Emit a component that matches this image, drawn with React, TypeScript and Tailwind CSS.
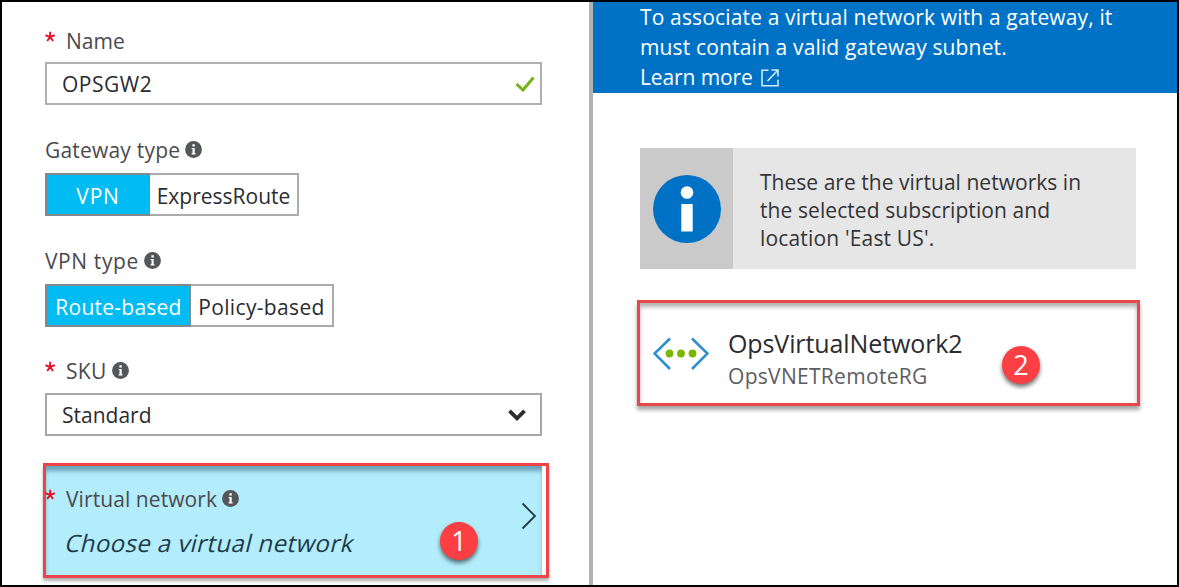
import type { ReactNode } from 'react';

function InfoDot({ className }: { className: string }) {
  return (
    <svg viewBox="0 0 17 17" className={`size-[17px] shrink-0 ${className}`}>
      <circle cx="8.5" cy="8.5" r="8.4" fill="#55565a" />
      <path d="M7.4 3.2h2.4v2.2H7.4zM6.6 6.9h3.1v5.4h.9v1.2H6.6v-1.2h.9V8.1h-.9z" fill="#fff" />
    </svg>
  );
}

function Required() {
  return (
    <svg viewBox="0 0 12 12" className="mt-[5px] h-3 w-[11px] shrink-0">
      <path
        d="M5.6 5.9V.4M5.6 5.9.5 4.1M5.6 5.9l5.1-1.8M5.6 5.9 2.4 10.4M5.6 5.9l3.2 4.5"
        stroke="#e3122a"
        strokeWidth="2.1"
        fill="none"
      />
    </svg>
  );
}

function Label({ children, required, info }: { children: ReactNode; required?: boolean; info?: boolean }) {
  return (
    <div className="flex h-[30px] items-start text-[21px] leading-[30px] text-[#4a4a4c]">
      {required && (
        <span className="flex w-[21px] shrink-0">
          <Required />
        </span>
      )}
      {children}
      {info && <InfoDot className="mt-[6px] ml-[5px]" />}
    </div>
  );
}

function Badge({ children, className }: { children: ReactNode; className: string }) {
  return (
    <div
      className={`absolute flex size-[38px] items-center justify-center rounded-full bg-[#fb3f43] pb-[2px] text-[27px] leading-none font-medium text-white shadow-[0_3px_4px_rgba(0,0,0,0.55)] ${className}`}
    >
      {children}
    </div>
  );
}

export default function App() {
  return (
    <div className="flex h-[587px] w-[1179px] overflow-hidden border-2 border-black bg-white font-['Open_Sans','Noto_Sans',sans-serif] whitespace-nowrap">
      <section className="w-[587px] shrink-0 pt-6 pl-[43px]">
        <Label required>
          <span>Name</span>
        </Label>
        <div className="mt-[6px] flex h-[43px] w-[497px] items-center justify-between border-2 border-[#b0b0b0] pr-[5px] pl-[15px] text-[21px] text-[#2b2c30]">
          <span className="pt-[2px] tracking-[0.5px]">OPSGW2</span>
          <svg viewBox="0 0 20 16" className="h-4 w-5">
            <path d="M1.5 8 8 14 18.5 1.5" fill="none" stroke="#74b31b" strokeWidth="3" />
          </svg>
        </div>

        <div className="mt-[30px]">
          <Label info>
            <span className="tracking-[0.2px]">Gateway type</span>
          </Label>
        </div>
        <div className="mt-2 flex h-[43px] text-[21px] leading-[38px]">
          <div className="flex w-[105px] items-center justify-center border-2 border-r border-[#808a8e] bg-[#00bcf2] text-white">
            <span className="pt-[3px] tracking-[0.8px]">VPN</span>
          </div>
          <div className="flex w-[149px] items-center justify-center border-2 border-l-0 border-[#ababab] text-[#2b2c30]">
            <span className="pt-[3px]">ExpressRoute</span>
          </div>
        </div>

        <div className="mt-[30px]">
          <Label info>
            <span className="tracking-[0.6px]">VPN type</span>
          </Label>
        </div>
        <div className="mt-2 flex h-[43px] text-[21px] leading-[38px]">
          <div className="flex w-[146px] items-center justify-center border-2 border-r border-[#808a8e] bg-[#00bcf2] text-white">
            <span className="pt-[3px] tracking-[0.25px]">Route-based</span>
          </div>
          <div className="flex w-[143px] items-center justify-center border-2 border-l-0 border-[#ababab] text-[#2b2c30]">
            <span className="pt-[3px] tracking-[0.35px]">Policy-based</span>
          </div>
        </div>

        <div className="mt-[29px]">
          <Label required info>
            <span className="tracking-[0.3px]">SKU</span>
          </Label>
        </div>
        <div className="mt-[7px] flex h-[43px] w-[497px] items-center justify-between border-2 border-[#a8a8a8] pr-[14px] pl-[15px] text-[21px] text-[#2b2c30]">
          <span className="pt-[3px]">Standard</span>
          <svg viewBox="0 0 18 12" className="h-3 w-[18px]">
            <path d="M1.5 1.8 9 9.3l7.5-7.5" fill="none" stroke="#2b2c30" strokeWidth="3.8" />
          </svg>
        </div>

        <div className="relative mt-[27px] -ml-[2px] h-[115px] w-[506px] border-[3px] border-[#ec4549] shadow-[0_3px_3px_rgba(0,0,0,0.3)]">
          <div className="flex h-[109px] w-[496px] bg-[#b3ecfb] pt-[18px] shadow-[inset_0_6px_4px_-1px_rgba(40,90,120,0.5)]">
            <div className="-ml-[1px] w-[476px]">
              <Label required info>
                <span className="tracking-[0.08px]">Virtual network</span>
              </Label>
              <div className="mt-[14px] pl-[21px] text-[24px] leading-[30px] tracking-[0.42px] text-[#1d3a48]">
                <span className="inline-block -skew-x-[14deg]">Choose a virtual network</span>
              </div>
            </div>
            <svg viewBox="0 0 16 28" className="mt-[18px] h-7 w-4">
              <path d="M1.5 1.5 14 14 1.5 26.5" fill="none" stroke="#1d3a48" strokeWidth="1.8" />
            </svg>
          </div>
          <Badge className="top-[56px] left-[394px]">1</Badge>
        </div>
      </section>

      <section className="w-[588px] shrink-0 border-l-4 border-[#b3b3b3]">
        <div className="h-[91px] bg-[#0072c6] pt-[1px] pl-[47px] text-[21px] leading-[29.5px] text-white">
          <div>
            <span className="tracking-[0.15px]">To associate a virtual network with a gateway, it</span>
          </div>
          <div>
            <span className="tracking-[0.15px]">must contain a valid gateway subnet.</span>
          </div>
          <div className="flex items-center pt-px">
            <span className="tracking-[-0.1px]">Learn more</span>
            <svg viewBox="0 0 18 18" className="mt-[1px] ml-[8px] size-[18px]" fill="none" stroke="#cfe9fb" strokeWidth="1.6">
              <path d="M7.5 1.2H1v15.6h16v-6M10.5 1h6.5v6.5M17 1 6.5 12" />
            </svg>
          </div>
        </div>

        <div className="mt-[55px] ml-[47px] flex h-[121px] w-[496px] bg-[#e6e6e6]">
          <div className="flex w-[93px] items-center justify-center bg-[#cacaca]">
            <svg viewBox="0 0 68 68" className="size-[68px]">
              <circle cx="34" cy="34" r="34" fill="#0072c6" />
              <circle cx="34" cy="17.5" r="6.3" fill="#fff" />
              <path d="M28.3 29h11.4v27.5H28.3z" fill="#fff" />
            </svg>
          </div>
          <div className="pt-5 pl-[27px] text-[21px] leading-[28px] text-[#333437]">
            <div>
              <span className="tracking-[0.03px]">These are the virtual networks in</span>
            </div>
            <div>
              <span className="tracking-[0.08px]">the selected subscription and</span>
            </div>
            <div>
              <span className="tracking-[0.17px]">location 'East US'.</span>
            </div>
          </div>
        </div>

        <div className="relative mt-[31px] ml-[44px] flex h-[106px] w-[503px] border-[3px] border-[#e8474b] shadow-[0_4px_4px_rgba(0,0,0,0.35),inset_0_4px_4px_rgba(0,0,0,0.3)]">
          <svg viewBox="0 0 56 34" className="mt-[34px] ml-[13px] h-[34px] w-14">
            <path d="M17 1.5 1.5 16.5 17 32M39 1.5l15.5 15L39 32" fill="none" stroke="#2f8fcc" strokeWidth="2.6" />
            <g fill="#7ab800">
              <circle cx="16.5" cy="16.5" r="3.9" />
              <circle cx="28" cy="16.5" r="3.9" />
              <circle cx="39.5" cy="16.5" r="3.9" />
            </g>
          </svg>
          <div className="pt-[22px] pl-[19px]">
            <div className="text-[25px] leading-[36px] tracking-[-0.1px] text-[#2b2c30]">
              <span>OpsVirtualNetwork2</span>
            </div>
            <div className="pt-px text-[21px] leading-[28px] tracking-[0.3px] text-[#5c5d60]">
              <span>OpsVNETRemoteRG</span>
            </div>
          </div>
          <Badge className="top-[43px] left-[362px]">2</Badge>
        </div>
      </section>
    </div>
  );
}
